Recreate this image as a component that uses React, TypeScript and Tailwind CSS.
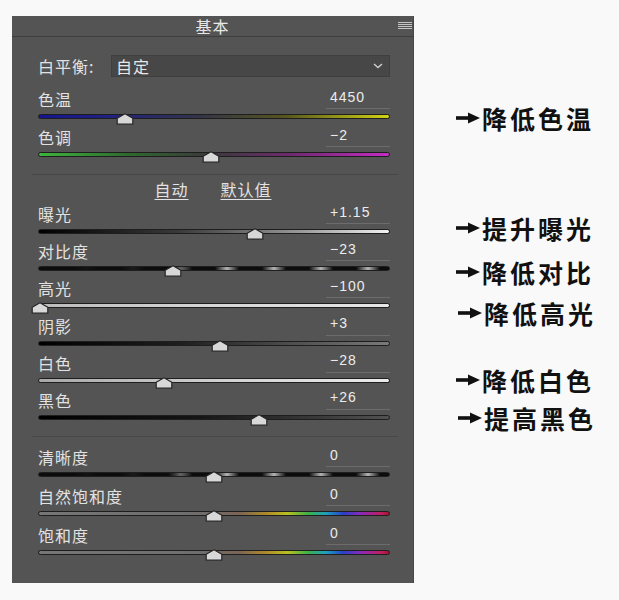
import React from "react";

type Row = { label: string; value: string; cx: number; track: string };

const topRows: Row[] = [
  {
    label: "色温",
    value: "4450",
    cx: 125,
    track:
      "bg-[linear-gradient(90deg,#14148e_0%,#22227e_22%,#33334a_45%,#55551e_70%,#d2d214_100%)]",
  },
  {
    label: "色调",
    value: "−2",
    cx: 211,
    track:
      "bg-[linear-gradient(90deg,#3db53d_0%,#2f6a2f_25%,#3a3a3a_48%,#6e2a6e_72%,#c42cc4_100%)]",
  },
];

const midRows: Row[] = [
  {
    label: "曝光",
    value: "+1.15",
    cx: 255,
    track: "bg-[linear-gradient(90deg,#000_0%,#3a3a3a_40%,#9a9a9a_75%,#f2f2f2_100%)]",
  },
  {
    label: "对比度",
    value: "−23",
    cx: 173,
    track:
      "bg-[image:linear-gradient(90deg,#0c0c0c_0%,rgba(12,12,12,0.9)_30%,rgba(12,12,12,0.5)_40%,rgba(12,12,12,0)_47%),repeating-linear-gradient(90deg,#b4b4b4_0px,#0c0c0c_12px,#0c0c0c_35px,#b4b4b4_47px)]",
  },
  {
    label: "高光",
    value: "−100",
    cx: 40,
    track: "bg-[linear-gradient(90deg,#bcbcbc_0%,#d6d6d6_50%,#e6e6e6_100%)]",
  },
  {
    label: "阴影",
    value: "+3",
    cx: 220,
    track: "bg-[linear-gradient(90deg,#000_0%,#1e1e1e_40%,#5a5a5a_80%,#7a7a7a_100%)]",
  },
  {
    label: "白色",
    value: "−28",
    cx: 164,
    track: "bg-[linear-gradient(90deg,#a8a8a8_0%,#cfcfcf_50%,#ebebeb_100%)]",
  },
  {
    label: "黑色",
    value: "+26",
    cx: 259,
    track: "bg-[linear-gradient(90deg,#000_0%,#151515_45%,#3a3a3a_80%,#525252_100%)]",
  },
];

const botRows: Row[] = [
  {
    label: "清晰度",
    value: "0",
    cx: 214,
    track:
      "bg-[image:linear-gradient(90deg,#0c0c0c_0%,rgba(12,12,12,0.9)_30%,rgba(12,12,12,0.5)_40%,rgba(12,12,12,0)_47%),repeating-linear-gradient(90deg,#b4b4b4_0px,#0c0c0c_12px,#0c0c0c_35px,#b4b4b4_47px)]",
  },
  {
    label: "自然饱和度",
    value: "0",
    cx: 214,
    track:
      "bg-[linear-gradient(90deg,#767676_0%,#6e6e6e_45%,#7a6456_57%,#b08a2a_65%,#b8c020_71%,#3cb04a_77%,#1ea0c0_82%,#2a3ec8_87%,#8a2ab8_92%,#c01e5a_98%,#a01030_100%)]",
  },
  {
    label: "饱和度",
    value: "0",
    cx: 214,
    track:
      "bg-[linear-gradient(90deg,#767676_0%,#6e6e6e_45%,#7a6456_57%,#b08a2a_65%,#b8c020_71%,#3cb04a_77%,#1ea0c0_82%,#2a3ec8_87%,#8a2ab8_92%,#c01e5a_98%,#a01030_100%)]",
  },
];

function Thumb({ cx }: { cx: number }) {
  return (
    <svg
      width="18"
      height="12"
      viewBox="0 0 18 12"
      className="absolute top-[4px]"
      style={{ left: cx - 38 - 9 }}
    >
      <path
        d="M9 0.8 L16.8 5.2 L16.8 11.2 L1.2 11.2 L1.2 5.2 Z"
        fill="#d8d8d8"
        stroke="#262626"
        strokeWidth="1.2"
        strokeLinejoin="round"
      />
    </svg>
  );
}

function SliderRow({ row, h }: { row: Row; h: string }) {
  return (
    <div className={`flex flex-col ${h}`}>
      <div className="flex h-[20px] items-center justify-between">
        <span className="text-[16px] leading-none tracking-[1px] text-[#e2e2e2]">{row.label}</span>
        <div className="flex h-[20px] w-[64px] items-center border-b border-[#6c6c6c] pb-[4px] pl-[4px] font-['Liberation_Sans',sans-serif] text-[14px] leading-none tracking-[1px] text-[#ececec]">
          {row.value}
        </div>
      </div>
      <div className="relative h-[17px]">
        <div
          className={`mt-[5px] h-[5px] w-full rounded-full border border-[#1e1e1e] ${row.track}`}
        />
        <Thumb cx={row.cx} />
      </div>
    </div>
  );
}

function Arrow() {
  return (
    <svg width="24" height="12" viewBox="0 0 24 12" className="shrink-0">
      <rect x="0" y="4.2" width="15" height="3.6" fill="#111" />
      <path d="M12 0.4 L24 6 L12 11.6 Z" fill="#111" />
    </svg>
  );
}

function Note({ text, cls }: { text: string; cls: string }) {
  return (
    <div className={`flex h-[32px] items-center gap-[2px] ${cls}`}>
      <Arrow />
      <span className="text-[25px] font-bold leading-none tracking-[3px] text-[#111]">{text}</span>
    </div>
  );
}

export default function App() {
  return (
    <div className="flex h-[600px] w-[619px] bg-[#f9f9f9] font-['Noto_Sans_CJK_SC','Noto_Sans',sans-serif]">
      <div className="ml-[12px] mt-[16px] flex h-[567px] w-[402px] shrink-0 flex-col border-r border-[#474747] bg-[#545454]">
        <div className="relative flex h-[21px] shrink-0 items-center justify-center border-b border-[#3e3e3e] bg-[#545454]">
          <span className="text-[16px] leading-none tracking-[1px] text-[#e8e8e8]">基本</span>
          <div className="absolute right-[1px] top-[6px] flex w-[14px] flex-col gap-[1px]">
            <div className="h-px bg-[#c4c4c4]" />
            <div className="h-px bg-[#c4c4c4]" />
            <div className="h-px bg-[#c4c4c4]" />
            <div className="h-px bg-[#c4c4c4]" />
          </div>
        </div>
        <div className="flex flex-col pl-[26px] pr-[23px] pt-[18px]">
          <div className="flex h-[22px] items-center">
            <span className="w-[73px] text-[16px] leading-none tracking-[1px] text-[#e2e2e2]">白平衡:</span>
            <div className="flex h-[22px] flex-1 items-center justify-between border border-[#3f3f3f] bg-[#474747] pl-[4px] pr-[6px]">
              <span className="text-[16px] leading-none tracking-[1px] text-[#e8e8e8]">自定</span>
              <svg width="10" height="6" viewBox="0 0 10 6">
                <path d="M1 1 L5 4.5 L9 1" fill="none" stroke="#cfcfcf" strokeWidth="1.4" />
              </svg>
            </div>
          </div>
          <div className="mt-[12px] flex flex-col">
            {topRows.map((r) => (
              <SliderRow key={r.label} row={r} h="h-[38px]" />
            ))}
          </div>
          <div className="ml-[-6px] mr-[-8px] mt-[9px] h-px bg-[#484848]" />
          <div className="flex h-[29px] items-center justify-center gap-[32px] pb-[2px] pr-[2px]">
            <span className="text-[16px] leading-none tracking-[1px] text-[#e2e2e2] underline underline-offset-[3px]">自动</span>
            <span className="text-[16px] leading-none tracking-[1px] text-[#e2e2e2] underline underline-offset-[3px]">默认值</span>
          </div>
          <div className="flex flex-col">
            {midRows.map((r) => (
              <SliderRow key={r.label} row={r} h="h-[37.2px]" />
            ))}
          </div>
          <div className="ml-[-6px] mr-[-8px] mt-[9px] h-px bg-[#484848]" />
          <div className="mt-[10px] flex flex-col">
            {botRows.map((r) => (
              <SliderRow key={r.label} row={r} h="h-[39px]" />
            ))}
          </div>
        </div>
      </div>
      <div className="ml-[42px] flex flex-col">
        <Note text="降低色温" cls="mt-[102px]" />
        <Note text="提升曝光" cls="mt-[78px]" />
        <Note text="降低对比" cls="mt-[12px]" />
        <Note text="降低高光" cls="mt-[9px] ml-[2px]" />
        <Note text="降低白色" cls="mt-[35px]" />
        <Note text="提高黑色" cls="mt-[6px] ml-[2px]" />
      </div>
    </div>
  );
}
